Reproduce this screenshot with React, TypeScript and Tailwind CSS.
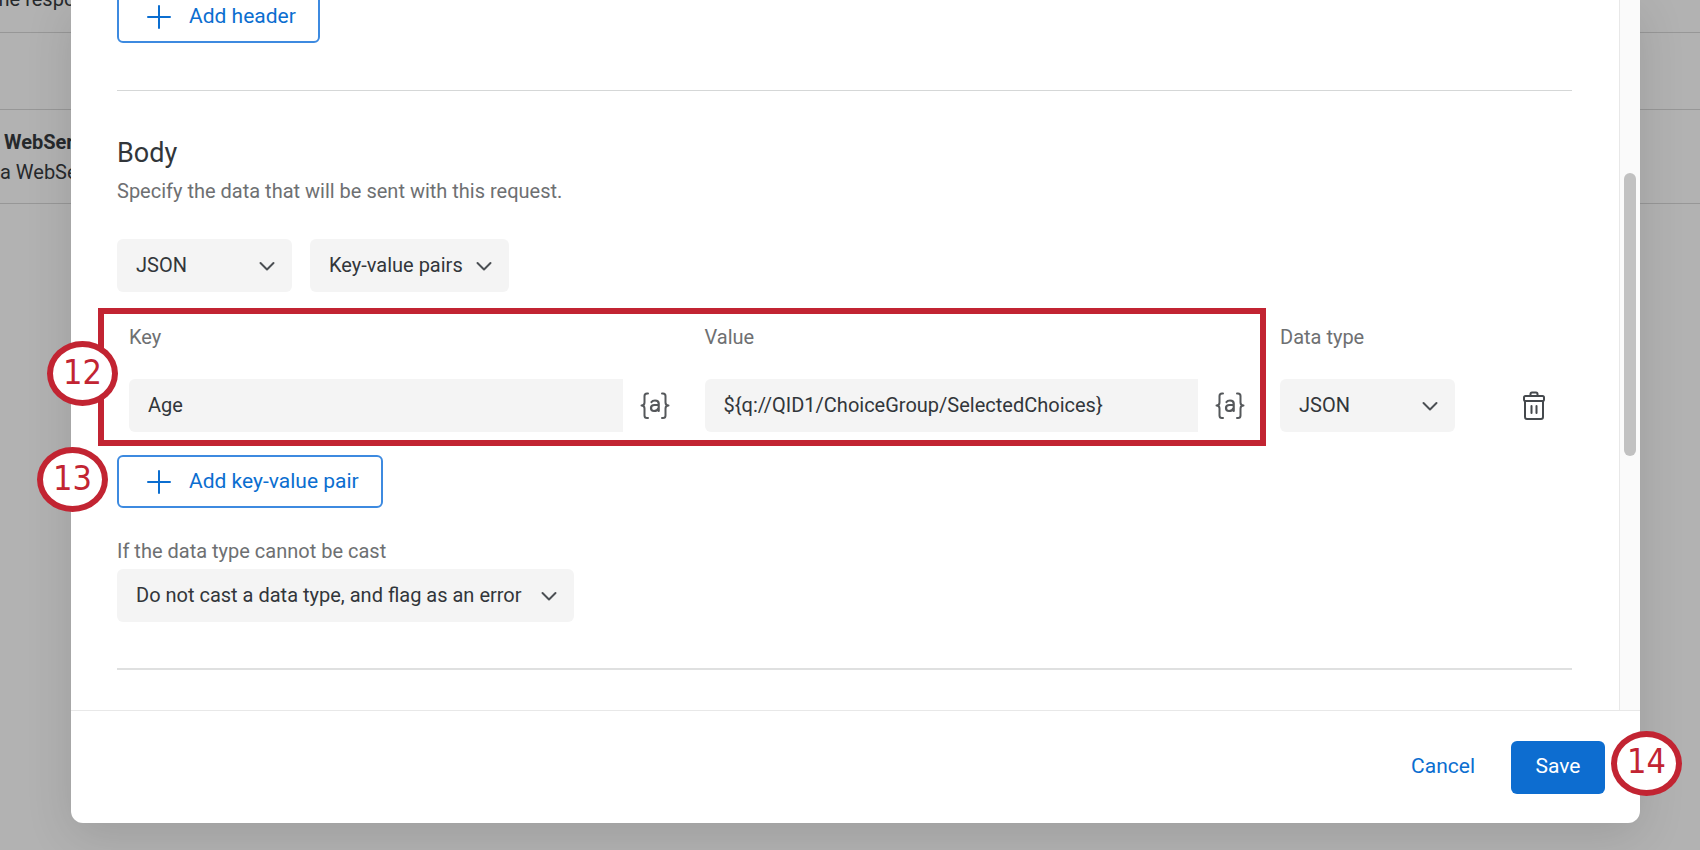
import { useState } from 'react';

interface PickerProps { id: string; label: string; options: string[]; className: string; }

function Picker({ id, label, options, className }: PickerProps) {
  const [value, setValue] = useState(options[0]);
  return (
    <div className={`relative h-[53px] ${className}`}>
      <select
        id={id}
        aria-label={label}
        value={value}
        onChange={e => setValue(e.target.value)}
        className="h-full w-full appearance-none rounded-md bg-[#f4f4f4] pb-[2px] pl-[19px] pr-9 text-[#32363a] outline-none"
      >
        {options.map(o => <option key={o}>{o}</option>)}
      </select>
      <svg viewBox="0 0 18 12" className="pointer-events-none absolute right-4 top-[21px] h-3 w-[18px]" fill="none" stroke="#4b4f53" strokeWidth="2" strokeLinecap="round" strokeLinejoin="round">
        <path d="M2.500 3 L9 9.500 L15.500 3" />
      </svg>
    </div>
  );
}

function AddButton({ children, className }: { children: string; className: string }) {
  return (
    <button type="button" className={`flex h-[53px] items-center gap-[18px] rounded-md border-2 border-[#3d8ae0] bg-white pl-7 text-[21px] text-[#0b6ed0] ${className}`}>
      <svg viewBox="0 0 24 24" className="h-6 w-6" fill="none" stroke="currentColor" strokeWidth="2" strokeLinecap="round">
        <path d="M12 1 V23 M1 12 H23" />
      </svg>
      <span>{children}</span>
    </button>
  );
}

function PipedField({ id, label, initial }: { id: string; label: string; initial: string }) {
  const [value, setValue] = useState(initial);
  return (
    <div className="flex-1">
      <label htmlFor={id} className="block h-6 leading-6 text-[#6e7072]">{label}</label>
      <div className="mt-[30px] flex">
        <input
          id={id}
          type="text"
          value={value}
          onChange={e => setValue(e.target.value)}
          className="h-[53px] min-w-0 flex-1 rounded-l-md bg-[#f4f4f4] px-[19px] pb-[2px] text-[#32363a] outline-none"
        />
        <button type="button" aria-label={`Insert piped text in ${label}`} className="mr-[18px] flex w-16 items-center justify-center">
          <svg viewBox="0 0 30 28" className="h-7 w-[30px]" fill="none" stroke="#55585b" strokeWidth="2" strokeLinecap="round" strokeLinejoin="round">
            <path d="M8 1.500 H7 Q4.500 1.500 4.500 4 V10.500 Q4.500 13.500 1.500 13.500 Q4.500 13.500 4.500 16.500 V23.500 Q4.500 26 7 26 H8" />
            <path d="M22 1.500 H23 Q25.500 1.500 25.500 4 V10.500 Q25.500 13.500 28.500 13.500 Q25.500 13.500 25.500 16.500 V23.500 Q25.500 26 23 26 H22" />
            <path d="M11.500 10 Q12.500 8.500 15 8.500 Q18.700 8.500 18.700 11.500 V19 M18.700 13 H14.500 Q11 13 11 16 Q11 19 14 19 Q17.500 19 18.700 16" strokeWidth="2.200" />
          </svg>
        </button>
      </div>
    </div>
  );
}

function StepBadge({ step, className }: { step: number; className: string }) {
  return (
    <span className={`absolute flex h-[65px] w-[71px] items-center justify-center rounded-[50%] border-[6px] border-[#c22432] bg-white pb-1 font-['DejaVu_Sans_Condensed','DejaVu_Sans',sans-serif] text-[34px] leading-none text-[#c22432] ${className}`}>
      {step}
    </span>
  );
}

export default function App() {
  return (
    <div className="relative h-screen min-h-[850px] overflow-hidden bg-[#b2b2b2] font-[Roboto,sans-serif] text-[20px] text-[#26292c]">
      {/* Page behind the dialog */}
      <div aria-hidden="true" className="whitespace-nowrap">
        <div className="flex h-[33px] items-end border-b border-[#979797] pb-[18px]">
          <p className="-ml-2 leading-[30px]">the response</p>
        </div>
        <div className="h-[77px] border-b border-[#979797]" />
        <div className="h-[94px] border-b border-[#979797] pt-[17px] leading-[30px]">
          <p className="pl-1 font-bold">WebService</p>
          <p>a WebService</p>
        </div>
      </div>

      <div className="absolute inset-0 flex pb-[27px] pl-[71px] pr-[60px]">
        <div role="dialog" aria-label="Web service request" className="relative flex min-w-0 flex-1 flex-col rounded-b-xl bg-white shadow-[0_12px_48px_rgba(0,0,0,0.12)]">
          <div className="flex min-h-0 flex-1">
            <div className="min-w-0 flex-1 pl-[46px] pr-[47px]">
              <AddButton className="-mt-[10px] w-[203px]">Add header</AddButton>
              <hr className="mt-[47px] border-[#d5d7d7]" />

              <section>
                <h2 className="mt-[46px] text-[27px] leading-8 text-[#32363a]">Body</h2>
                <p className="mt-[10px] leading-6 text-[#6e7072]">Specify the data that will be sent with this request.</p>
                <div className="mt-9 flex gap-[18px]">
                  <Picker id="format" label="Body format" options={['JSON', 'XML']} className="w-[175px]" />
                  <Picker id="mode" label="Entry mode" options={['Key-value pairs', 'Free form']} className="w-[199px]" />
                </div>

                <div className="mt-[33px] flex pl-3">
                  <div className="relative flex flex-1">
                    <PipedField id="key" label="Key" initial="Age" />
                    <PipedField id="value" label="Value" initial="${q://QID1/ChoiceGroup/SelectedChoices}" />
                    <div className="pointer-events-none absolute -bottom-[14px] -left-[31px] -top-[17px] right-[14px] border-[6px] border-[#c22432]" />
                    <StepBadge step={12} className="-left-[82px] top-4" />
                  </div>
                  <div className="w-[175px]">
                    <label htmlFor="type" className="block h-6 leading-6 text-[#6e7072]">Data type</label>
                    <Picker id="type" label="Data type" options={['JSON', 'Text', 'Number']} className="mt-[30px] w-full" />
                  </div>
                  <button type="button" aria-label="Delete pair" className="ml-[41px] mt-[54px] flex h-[53px] w-[76px] items-center justify-center">
                    <svg viewBox="0 0 24 30" className="h-[30px] w-6" fill="none" stroke="#45494d" strokeWidth="2" strokeLinecap="round" strokeLinejoin="round">
                      <rect x="2" y="5" width="20" height="5" rx="1.500" />
                      <path d="M8.500 5 V3 Q8.500 1.500 10 1.500 H14 Q15.500 1.500 15.500 3 V5" />
                      <path d="M3 10 V26 Q3 28 5 28 H19 Q21 28 21 26 V10 M9.500 15 V22 M14.500 15 V22" />
                    </svg>
                  </button>
                </div>

                <div className="relative mt-[23px] w-[266px]">
                  <AddButton className="w-full">Add key-value pair</AddButton>
                  <StepBadge step={13} className="-left-20 -top-2" />
                </div>

                <label htmlFor="cast" className="mt-[31px] block leading-6 text-[#6e7072]">If the data type cannot be cast</label>
                <Picker id="cast" label="If the data type cannot be cast" options={['Do not cast a data type, and flag as an error', 'Cast as text']} className="mt-[6px] w-[457px]" />
              </section>
              <hr className="mt-[46px] border-t-2 border-[#dfe0e0]" />
            </div>

            {/* Scrollbar */}
            <div className="flex w-[21px] justify-center border-l border-[#e8e8e8] bg-[#fafafa]">
              <div className="mt-[173px] h-[283px] w-3 rounded-full bg-[#c1c1c1]" />
            </div>
          </div>

          <footer className="flex h-[113px] items-center justify-end gap-[18px] border-t border-[#e8e8e8] pr-[35px]">
            <button type="button" className="h-[53px] px-[18px] text-[21px] text-[#0b6ed0]">Cancel</button>
            <div className="relative">
              <button type="button" className="h-[53px] w-[94px] rounded-md bg-[#0d6dd0] text-[21px] text-white">Save</button>
              <StepBadge step={14} className="-right-[77px] -top-[10px]" />
            </div>
          </footer>
        </div>
      </div>
    </div>
  );
}
